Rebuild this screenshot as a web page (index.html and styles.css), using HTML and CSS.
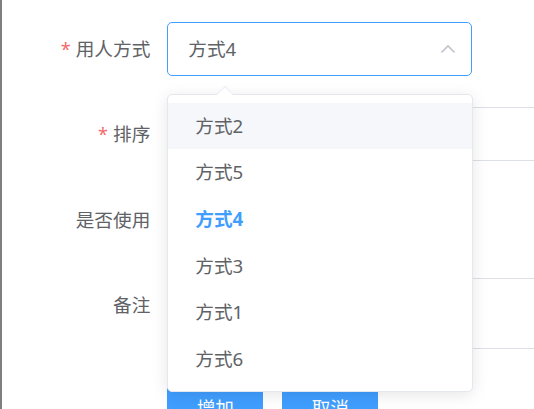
FILE: index.html
```html
<!DOCTYPE html>
<html lang="zh-CN">
<head>
<meta charset="utf-8">
<title>表单</title>
<link rel="stylesheet" href="styles.css">
</head>
<body>
<div class="frame">
  <form class="form">
    <div class="form-item">
      <label class="label"><span class="req">*</span>用人方式</label>
      <div class="select">
        <span class="select-value">方式4</span>
        <svg class="chevron" width="16" height="10" viewBox="0 0 16 10"><path d="M1.5 8.5 L8 2 L14.5 8.5" fill="none" stroke="#c0c4cc" stroke-width="1.6"/></svg>
      </div>
    </div>
    <div class="form-item">
      <label class="label"><span class="req">*</span>排序</label>
      <div class="input"></div>
    </div>
    <div class="form-item row-switch">
      <label class="label">是否使用</label>
      <div class="blank"></div>
    </div>
    <div class="form-item">
      <label class="label">备注</label>
      <div class="textarea"></div>
    </div>
    <div class="form-item">
      <div class="label"></div>
      <div class="buttons">
        <button type="button" class="btn">增加</button>
        <button type="button" class="btn">取消</button>
      </div>
    </div>
  </form>

  <div class="dropdown">
    <ul class="options">
      <li class="option hover">方式2</li>
      <li class="option">方式5</li>
      <li class="option selected">方式4</li>
      <li class="option">方式3</li>
      <li class="option">方式1</li>
      <li class="option">方式6</li>
    </ul>
  </div>
</div>
</body>
</html>
```

FILE: styles.css
```css
html, body {
  margin: 0;
  padding: 0;
  width: 534px;
  height: 409px;
  overflow: hidden;
  background: #ffffff;
}

.frame {
  position: relative;
  width: 532px;
  height: 409px;
  border-left: 2px solid #7f7f7f;
  font-family: "Noto Sans", "Noto Sans CJK SC", sans-serif;
  font-size: 18.67px;
  color: #606266;
  overflow: hidden;
}

.form {
  padding-top: 22.3px;
  margin: 0;
}

.form-item {
  display: flex;
  align-items: flex-start;
  margin-bottom: 30.4px;
}

.row-switch {
  padding-top: 2px;
}

.label {
  flex: 0 0 auto;
  box-sizing: border-box;
  width: 165.3px;
  padding-right: 17px;
  text-align: right;
  line-height: 54px;
  height: 54px;
  white-space: nowrap;
}

.req {
  color: #f56c6c;
  margin-right: 5px;
  font-size: 18px;
}

.select {
  box-sizing: border-box;
  width: 304.5px;
  height: 54px;
  border: 1px solid #409eff;
  border-radius: 5px;
  padding: 0 15px 0 20px;
  display: flex;
  align-items: center;
  justify-content: space-between;
  flex: 0 0 auto;
}

.select-value {
  line-height: 1;
}

.chevron {
  display: block;
}

.input {
  box-sizing: border-box;
  width: 420px;
  height: 54.3px;
  border: 1px solid #dcdfe6;
  border-radius: 5px;
  flex: 0 0 auto;
}

.blank {
  height: 54px;
}

.textarea {
  box-sizing: border-box;
  width: 420px;
  height: 71.5px;
  border: 1px solid #dcdfe6;
  border-radius: 5px;
  flex: 0 0 auto;
}

.buttons {
  display: flex;
  gap: 19px;
}

.btn {
  width: 96px;
  height: 53.3px;
  background: #409eff;
  border: 1px solid #409eff;
  border-radius: 5px;
  color: #ffffff;
  font-family: "Noto Sans", "Noto Sans CJK SC", sans-serif;
  font-size: 18.67px;
  padding: 0;
}

.dropdown {
  position: absolute;
  top: 93.7px;
  left: 165.3px;
  box-sizing: border-box;
  width: 305.5px;
  background: #ffffff;
  border: 1px solid #e4e7ed;
  border-radius: 5px;
  box-shadow: 0 3px 16px 0 rgba(0, 0, 0, 0.1);
}

.dropdown::before,
.dropdown::after {
  content: "";
  position: absolute;
  left: 49px;
  width: 0;
  height: 0;
  border-style: solid;
  border-color: transparent;
  border-top-width: 0;
}

.dropdown::before {
  top: -9px;
  border-width: 0 8px 8px 8px;
  border-bottom-color: #e4e7ed;
}

.dropdown::after {
  top: -7.5px;
  border-width: 0 8px 8px 8px;
  border-bottom-color: #ffffff;
}

.options {
  list-style: none;
  margin: 0;
  padding: 8px 0;
}

.option {
  box-sizing: border-box;
  height: 46.67px;
  line-height: 46.67px;
  padding: 0 27px;
  white-space: nowrap;
}

.option.hover {
  background: #f5f7fa;
}

.option.selected {
  color: #409eff;
  font-weight: 700;
}
```
